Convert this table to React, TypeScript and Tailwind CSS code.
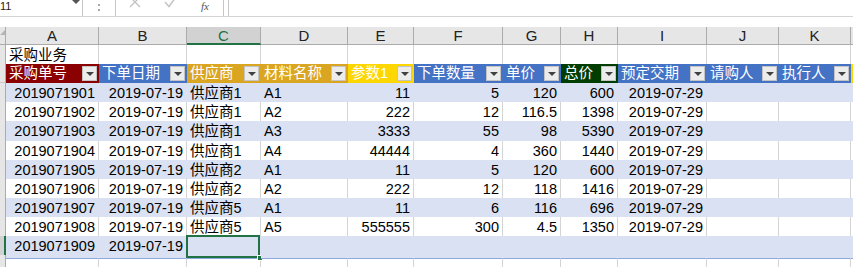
import React from 'react';

const GRID = "grid grid-cols-[6px_93px_88px_74px_87px_66px_89px_58px_57px_89px_72px_72px_60px]";
const FONT = "font-['Liberation_Sans','Noto_Sans_CJK_SC',sans-serif]";

const letters = ['A', 'B', 'C', 'D', 'E', 'F', 'G', 'H', 'I', 'J', 'K', ''];

const headers = [
  { label: '采购单号', bg: 'bg-[#8b0000]' },
  { label: '下单日期', bg: 'bg-[#4472c4]' },
  { label: '供应商', bg: 'bg-[#daa520]' },
  { label: '材料名称', bg: 'bg-[#daa520]' },
  { label: '参数1', bg: 'bg-[#ffd700]' },
  { label: '下单数量', bg: 'bg-[#4472c4]' },
  { label: '单价', bg: 'bg-[#4472c4]' },
  { label: '总价', bg: 'bg-[#003d00]' },
  { label: '预定交期', bg: 'bg-[#4472c4]' },
  { label: '请购人', bg: 'bg-[#4472c4]' },
  { label: '执行人', bg: 'bg-[#4472c4]' },
  { label: '', bg: 'bg-[#ffd700]' },
];

// numbers and dates sit at the right edge, text at the left
const rightAligned = [true, true, false, false, true, true, true, true, true, false, false, false];

const rows = [
  ['2019071901', '2019-07-19', '供应商1', 'A1', '11', '5', '120', '600', '2019-07-29'],
  ['2019071902', '2019-07-19', '供应商1', 'A2', '222', '12', '116.5', '1398', '2019-07-29'],
  ['2019071903', '2019-07-19', '供应商1', 'A3', '3333', '55', '98', '5390', '2019-07-29'],
  ['2019071904', '2019-07-19', '供应商1', 'A4', '44444', '4', '360', '1440', '2019-07-29'],
  ['2019071905', '2019-07-19', '供应商2', 'A1', '11', '5', '120', '600', '2019-07-29'],
  ['2019071906', '2019-07-19', '供应商2', 'A2', '222', '12', '118', '1416', '2019-07-29'],
  ['2019071907', '2019-07-19', '供应商5', 'A1', '11', '6', '116', '696', '2019-07-29'],
  ['2019071908', '2019-07-19', '供应商5', 'A5', '555555', '300', '4.5', '1350', '2019-07-29'],
  ['2019071909', '2019-07-19', '', '', '', '', '', '', ''],
];

const rowHeights = ['h-[19px]', 'h-[19px]', 'h-[20px]', 'h-[19px]', 'h-[19px]', 'h-[19px]', 'h-[19px]', 'h-[19px]', 'h-[19px]'];

function FilterButton() {
  return (
    <div className="w-[15px] h-[15px] shrink-0 bg-[#ececec] border border-[#c4c4c4] flex items-center justify-center">
      <div className="w-0 h-0 border-l-[4px] border-r-[4px] border-t-[4px] border-l-transparent border-r-transparent border-t-[#404040]" />
    </div>
  );
}

function TopBar() {
  return (
    <div className="h-[27px] bg-white">
      <div className="flex h-[17px] border-b border-[#d4d4d4]">
        <div className="relative w-[83px] border-r border-[#c6c6c6] overflow-hidden">
          <span className="absolute left-0 top-0 text-[11px] leading-[12px] text-[#222]">11</span>
          <div className="absolute left-[72px] top-0 w-0 h-0 border-l-[4px] border-r-[4px] border-t-[4px] border-l-transparent border-r-transparent border-t-[#555]" />
        </div>
        <div className="w-[32px] flex flex-col items-center pt-[4px] gap-[3px]">
          <div className="w-[2px] h-[2px] bg-[#a8a8a8]" />
          <div className="w-[2px] h-[2px] bg-[#a8a8a8]" />
        </div>
        <div className="relative w-[109px] border-x border-[#c6c6c6] overflow-hidden">
          <svg className="absolute left-[13px] -top-[4px]" width="12" height="12" viewBox="0 0 12 12">
            <path d="M1 1 L11 11 M11 1 L1 11" stroke="#c4c4c4" strokeWidth="1.4" fill="none" />
          </svg>
          <svg className="absolute left-[48px] -top-[4px]" width="13" height="12" viewBox="0 0 13 12">
            <path d="M1 6 L5 10.5 L12 1" stroke="#c4c4c4" strokeWidth="1.5" fill="none" />
          </svg>
          <span className="absolute left-[85px] top-0 text-[11px] leading-[12px] italic text-[#555] font-['Liberation_Serif',serif]">fx</span>
        </div>
        <div className="w-[4px]" />
        <div className="flex-1 border-l border-[#c6c6c6]" />
      </div>
    </div>
  );
}

function ColumnHeaders() {
  return (
    <div className={`${GRID} h-[18px]`}>
      <div className="relative bg-[#e6e6e6] border-r border-b border-[#ababab]">
        <div className="absolute left-0 top-[3px] w-0 h-0 border-r-[5px] border-t-[5px] border-r-[#b5b5b5] border-t-transparent" />
      </div>
      {letters.map((l, i) =>
        l === 'C' ? (
          <div key={i} className="flex items-center justify-center bg-[#d2d2d2] border-r border-[#ababab] border-b-2 border-b-[#217346] text-[#217346] text-[15px] leading-none">
            {l}
          </div>
        ) : (
          <div key={i} className="flex items-center justify-center bg-[#e6e6e6] border-r border-b border-[#ababab] text-[#222] text-[15px] leading-none">
            {l}
          </div>
        )
      )}
    </div>
  );
}

export default function App() {
  return (
    <div className={`w-[853px] h-[267px] overflow-hidden bg-white ${FONT} text-[14.5px] text-black`}>
      <TopBar />
      <ColumnHeaders />

      {/* title row */}
      <div className={`${GRID} h-[19px]`}>
        <div className="bg-[#e6e6e6] border-r border-r-[#ababab] border-b border-b-[#c8c8c8]" />
        {letters.map((l, i) => (
          <div key={i} className="flex items-center px-[3px] whitespace-nowrap border-r border-r-[#d4d4d4] border-b border-b-[#8ea9db]">
            {l === 'A' ? '采购业务' : ''}
          </div>
        ))}
      </div>

      {/* table header row */}
      <div className={`${GRID} h-[19px]`}>
        <div className="bg-[#e6e6e6] border-r border-r-[#ababab] border-b border-b-[#c8c8c8]" />
        {headers.map((h, i) => (
          <div key={i} className={`flex items-center justify-between pl-[3px] pr-[2px] text-white whitespace-nowrap overflow-hidden ${h.bg}`}>
            <span>{h.label}</span>
            {h.label && <FilterButton />}
          </div>
        ))}
      </div>

      {/* data rows */}
      {rows.map((r, ri) => {
        const banded = ri % 2 === 0;
        const last = ri === rows.length - 1;
        return (
          <div key={ri} className={`${GRID} ${rowHeights[ri]}`}>
            <div
              className={
                last
                  ? 'bg-[#d2d2d2] border-r-2 border-r-[#217346] border-b border-b-[#c8c8c8]'
                  : 'bg-[#e6e6e6] border-r border-r-[#ababab] border-b border-b-[#c8c8c8]'
              }
            />
            {letters.map((_, ci) => (
              <div
                key={ci}
                className={`relative flex items-center px-[3px] whitespace-nowrap border-r border-b border-b-[#8ea9db] ${
                  banded ? 'bg-[#d9e1f2] border-r-[#d9e1f2]' : 'bg-white border-r-[#d4d4d4]'
                } ${rightAligned[ci] ? 'justify-end' : ''}`}
              >
                {r[ci] ?? ''}
                {last && ci === 2 && (
                  <>
                    <div className="absolute -left-[1px] -top-[1px] right-0 bottom-0 border-2 border-[#217346]" />
                    <div className="absolute -right-[3px] -bottom-[3px] w-[6px] h-[6px] bg-[#217346] border border-white" />
                  </>
                )}
              </div>
            ))}
          </div>
        );
      })}

      {/* empty row below the table */}
      <div className={`${GRID} h-[19px]`}>
        <div className="bg-[#e6e6e6] border-r border-r-[#ababab] border-b border-b-[#c8c8c8]" />
        {letters.map((_, i) => (
          <div key={i} className="border-r border-r-[#d4d4d4] border-b border-b-[#d4d4d4]" />
        ))}
      </div>
    </div>
  );
}
